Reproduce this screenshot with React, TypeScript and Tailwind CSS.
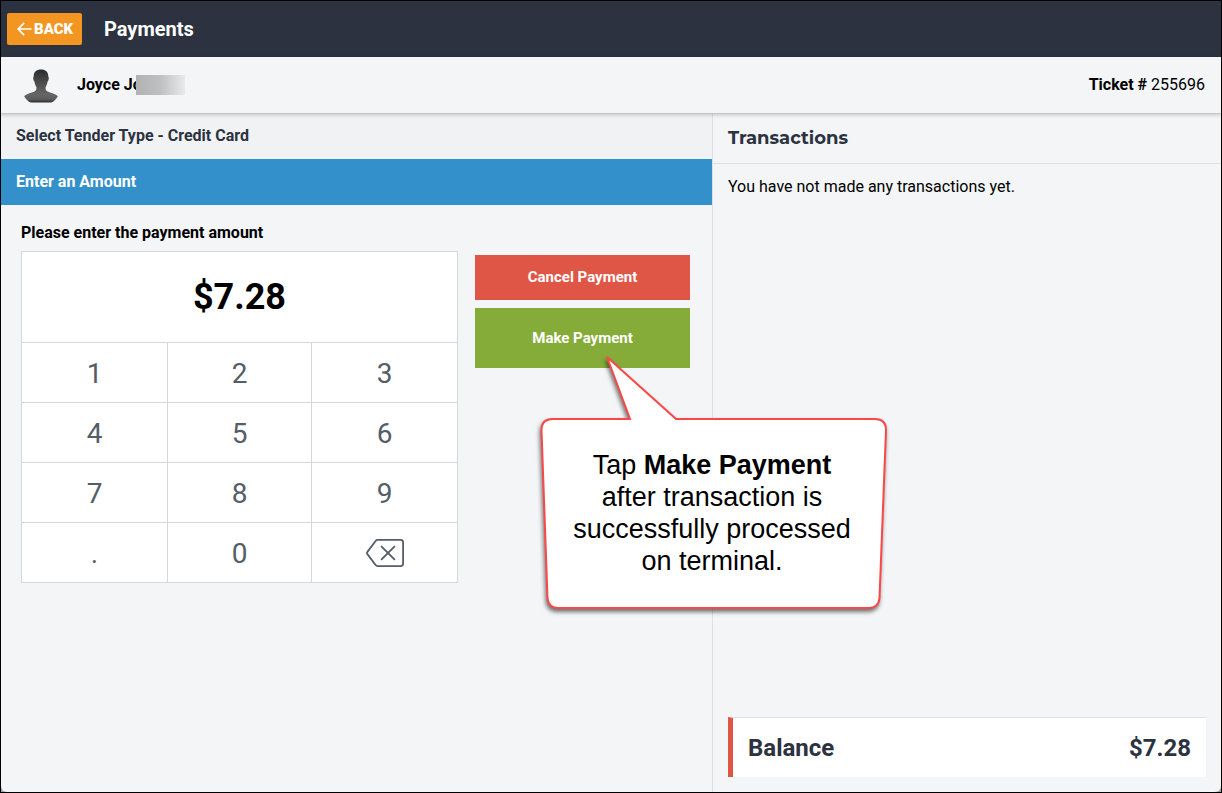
import React, { useState } from 'react';

const KEYS = ['1', '2', '3', '4', '5', '6', '7', '8', '9', '.', '0'];

function BackArrow() {
  return (
    <svg width="15" height="14" viewBox="0 0 15 14" fill="none" stroke="currentColor" strokeWidth="1.7" aria-hidden="true">
      <path d="M7.2 0.8 L1.2 7 L7.2 13.2 M1.2 7 H14.5" />
    </svg>
  );
}

function Avatar() {
  return (
    <svg width="34" height="36" viewBox="0 -2 34 36" aria-hidden="true">
      <defs>
        <linearGradient id="skin" x1="0" y1="0" x2="0" y2="1">
          <stop offset="0" stopColor="#2c2c2c" />
          <stop offset="0.3" stopColor="#454545" />
          <stop offset="0.75" stopColor="#666" />
          <stop offset="0.9" stopColor="#5c5c5c" />
          <stop offset="1" stopColor="#2c2c2c" />
        </linearGradient>
      </defs>
      <path
        fill="url(#skin)"
        d="M17 0.5 C21.5 0.5 24.4 3 24.3 7.5 C25.2 8.6 24.8 11.6 23.6 12.6 C23.2 15.4 22.4 16.8 21.6 18 C21.4 20.5 21.9 21.8 24 22.7 C28 24.2 32.3 25 33.8 27.4 C31.5 31 28.5 33.4 26.2 33.6 H7.8 C5.5 33.4 2.5 31 0.2 27.4 C1.7 25 6 24.2 10 22.7 C12.1 21.8 12.6 20.5 12.4 18 C11.6 16.8 10.8 15.4 10.4 12.6 C9.2 11.6 8.8 8.6 9.7 7.5 C9.6 3 12.5 0.5 17 0.5 Z"
      />
    </svg>
  );
}

function BackspaceIcon() {
  return (
    <svg width="38" height="28" viewBox="0 0 38 28" fill="none" stroke="#555d68" strokeWidth="1.8" strokeLinejoin="round" strokeLinecap="round" aria-hidden="true">
      <path d="M11.8 0.9 H34.6 Q37.1 0.9 37.1 3.4 V24.6 Q37.1 27.1 34.6 27.1 H11.8 Q10.4 27.1 9.6 26 L1.6 15.4 Q0.5 14 1.6 12.6 L9.6 2 Q10.4 0.9 11.8 0.9 Z" />
      <path d="M15.6 7.6 L28.4 20.4 M28.4 7.6 L15.6 20.4" />
    </svg>
  );
}

function Callout() {
  return (
    <div className="pointer-events-none absolute top-[42px] left-[60px] h-[270px] w-[360px]">
      <svg width="360" height="270" viewBox="0 0 360 270" className="absolute inset-0 overflow-visible" aria-hidden="true">
        <path
          d="M72 7 L95 69 H17.5 Q6.5 69 6.5 80 L12.5 248 Q13.5 258 23.5 258 H333.5 Q343.5 258 344.5 248 L351 80 Q351 69 340 69 H141 Z"
          fill="#fff"
          stroke="#fb4747"
          strokeWidth="2"
          className="drop-shadow-[-1px_3px_2px_rgba(0,0,0,0.55)]"
        />
      </svg>
      <p className="relative pt-[99px] pr-[6px] text-center font-['Liberation_Sans',sans-serif] text-[27px] leading-[32px] text-black">
        Tap <b>Make Payment</b>
        <br />
        after transaction is
        <br />
        successfully processed
        <br />
        on terminal.
      </p>
    </div>
  );
}

export default function App() {
  const [digits, setDigits] = useState('728');
  const amount = '$' + (Number(digits || '0') / 100).toFixed(2);

  const press = (key: string) => {
    if (key !== '.') setDigits((d) => (d + key).slice(0, 8));
  };

  return (
    <div className="flex min-h-screen flex-col border border-black bg-[#a5a5a0] font-['Roboto',sans-serif] text-base text-black">
      <header className="flex h-14 shrink-0 items-center gap-[22px] bg-[#2c323f] px-1.5 text-white">
        <button type="button" className="flex h-8 w-[75px] items-center gap-0.5 rounded-xs bg-[#f39621] pl-2.5 text-[15px] font-black">
          <BackArrow />
          BACK
        </button>
        <h1 className="text-xl font-bold">Payments</h1>
      </header>

      <section className="relative z-10 flex h-[57px] shrink-0 items-center justify-between border-b border-[#c4c6c9] bg-[#f3f5f7] pr-4 pl-[23px] shadow-[0_1px_4px_rgba(0,0,0,0.2)]">
        <div className="flex items-center">
          <Avatar />
          <span className="ml-[19px] font-bold whitespace-nowrap">Joyce Jo</span>
          <span className="relative -ml-1.5 h-5 w-[49px] bg-linear-to-r from-[#b1b2b4] via-[#bfc0c2] to-[#e9eaec]" />
        </div>
        <p>
          <b className="font-bold">Ticket #</b> 255696
        </p>
      </section>

      <main className="grid flex-1 grid-cols-[711fr_509fr] rounded-b-md bg-[#f3f5f7]">
        <section>
          <h2 className="flex h-[45px] items-center bg-[#f1f2f4] px-[15px] pb-0.5 font-bold text-[#2c323f]">Select Tender Type - Credit Card</h2>
          <h3 className="flex h-[46px] items-center bg-[#3490ca] px-[15px] font-bold text-white">Enter an Amount</h3>

          <div className="pt-4 pr-[22px] pl-5">
            <h4 className="font-bold">Please enter the payment amount</h4>
            <div className="mt-1.5 grid grid-cols-[437fr_215fr] items-start gap-[17px]">
              <div className="border border-[#d5d8db] bg-white">
                <output className="flex h-[91px] items-center justify-center border-b border-[#d5d8db] text-4xl font-bold">{amount}</output>
                <div className="grid grid-cols-[145fr_143fr_145fr] gap-px bg-[#d5d8db]">
                  {KEYS.map((key) => (
                    <button key={key} type="button" onClick={() => press(key)} className="h-[59px] bg-white pt-0.5 text-[28px] text-[#555d68]">
                      {key}
                    </button>
                  ))}
                  <button
                    type="button"
                    aria-label="Backspace"
                    onClick={() => setDigits((d) => d.slice(0, -1))}
                    className="flex h-[59px] items-center justify-center bg-white"
                  >
                    <BackspaceIcon />
                  </button>
                </div>
              </div>

              <div className="flex flex-col gap-2 pt-1">
                <button type="button" className="h-[45px] bg-[#df5647] text-[15px] font-bold text-white">
                  Cancel Payment
                </button>
                <div className="relative">
                  <button type="button" className="h-[60px] w-full bg-[#85ac39] text-[15px] font-bold text-white">
                    Make Payment
                  </button>
                  <Callout />
                </div>
              </div>
            </div>
          </div>
        </section>

        <aside className="flex flex-col border-l border-[#dee0e3]">
          <h2 className="flex h-[50px] items-center border-b border-[#dee0e3] px-[15px] pb-0.5 font-['Montserrat','Inter',sans-serif] text-lg font-bold text-[#2c323f]">
            Transactions
          </h2>
          <p className="px-[15px] py-[11px]">You have not made any transactions yet.</p>
          <dl className="mx-[15px] mt-auto mb-[15px] flex h-[60px] items-center justify-between border-t border-l-5 border-t-[#dee0e3] border-l-[#df5647] bg-white px-[15px] text-2xl font-bold text-[#2c323f]">
            <dt>Balance</dt>
            <dd>{amount}</dd>
          </dl>
        </aside>
      </main>
    </div>
  );
}
